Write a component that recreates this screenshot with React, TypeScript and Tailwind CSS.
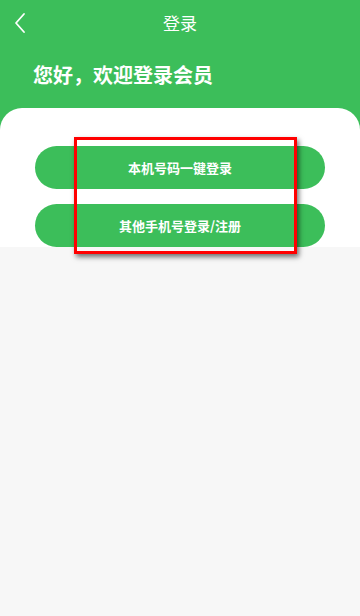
const buttons = ["本机号码一键登录", "其他手机号登录/注册"];

export default function App() {
  return (
    <div
      className="relative min-h-[616px] w-full bg-[#f7f7f7]"
      style={{ fontFamily: '"Noto Sans CJK SC", "Noto Sans", sans-serif' }}
    >
      <div className="bg-[#3cbe5a]">
        <div className="relative flex h-[44px] items-center justify-center">
          <button className="absolute left-[12px] top-[12px] flex h-[22px] w-[16px] items-center justify-center">
            <svg width="14" height="22" viewBox="0 0 14 22" fill="none">
              <polyline
                points="11,2 3,11 11,20"
                stroke="white"
                strokeWidth="1.8"
                strokeLinecap="round"
                strokeLinejoin="round"
              />
            </svg>
          </button>
          <span className="text-[17px] leading-none text-white">登录</span>
        </div>
        <h1 className="px-[33px] pt-[17px] pb-[19px] text-[20px] font-bold leading-[28px] text-white">
          您好，欢迎登录会员
        </h1>
        <div className="flex flex-col gap-[15px] rounded-t-[22px] bg-white px-[35px] pt-[38px]">
          {buttons.map((label) => (
            <button
              key={label}
              className="flex h-[43px] w-full items-center justify-center rounded-full bg-[#3cbe5a] text-[13px] font-bold text-white"
            >
              {label}
            </button>
          ))}
        </div>
      </div>
      <div className="pointer-events-none absolute left-[74px] top-[137px] h-[117px] w-[223px] border-[3px] border-[#ff0000] shadow-[2px_3px_5px_rgba(0,0,0,0.55)]" />
    </div>
  );
}
